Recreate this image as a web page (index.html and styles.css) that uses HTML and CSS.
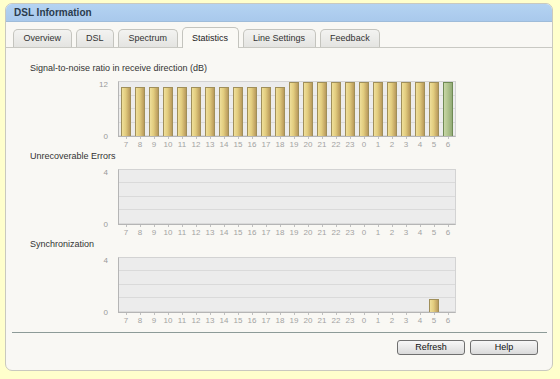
FILE: index.html
```html
<!DOCTYPE html>
<html>
<head>
<meta charset="utf-8">
<link rel="stylesheet" href="styles.css">
</head>
<body>
<div class="panel">
  <div class="header">DSL Information</div>
  <div class="tabs">
    <div class="tab">Overview</div>
    <div class="tab">DSL</div>
    <div class="tab">Spectrum</div>
    <div class="tab active">Statistics</div>
    <div class="tab">Line Settings</div>
    <div class="tab">Feedback</div>
  </div>
  <div class="content">
    <div class="chart">
      <div class="chart-title">Signal-to-noise ratio in receive direction (dB)</div>
      <div class="chart-row">
        <div class="y-axis"><span>12</span><span>0</span></div>
        <div class="plot">
          <div class="slot"><div class="bar" style="height:49.5px"></div></div>
          <div class="slot"><div class="bar" style="height:49.5px"></div></div>
          <div class="slot"><div class="bar" style="height:49.5px"></div></div>
          <div class="slot"><div class="bar" style="height:49.5px"></div></div>
          <div class="slot"><div class="bar" style="height:49.5px"></div></div>
          <div class="slot"><div class="bar" style="height:49.5px"></div></div>
          <div class="slot"><div class="bar" style="height:49.5px"></div></div>
          <div class="slot"><div class="bar" style="height:49.5px"></div></div>
          <div class="slot"><div class="bar" style="height:49.5px"></div></div>
          <div class="slot"><div class="bar" style="height:49.5px"></div></div>
          <div class="slot"><div class="bar" style="height:49.5px"></div></div>
          <div class="slot"><div class="bar" style="height:49.5px"></div></div>
          <div class="slot"><div class="bar" style="height:54px"></div></div>
          <div class="slot"><div class="bar" style="height:54px"></div></div>
          <div class="slot"><div class="bar" style="height:54px"></div></div>
          <div class="slot"><div class="bar" style="height:54px"></div></div>
          <div class="slot"><div class="bar" style="height:54px"></div></div>
          <div class="slot"><div class="bar" style="height:54px"></div></div>
          <div class="slot"><div class="bar" style="height:54px"></div></div>
          <div class="slot"><div class="bar" style="height:54px"></div></div>
          <div class="slot"><div class="bar" style="height:54px"></div></div>
          <div class="slot"><div class="bar" style="height:54px"></div></div>
          <div class="slot"><div class="bar" style="height:54px"></div></div>
          <div class="slot"><div class="bar current" style="height:54px"></div></div>
        </div>
      </div>
      <div class="x-axis">
        <span>7</span><span>8</span><span>9</span><span>10</span><span>11</span><span>12</span><span>13</span><span>14</span><span>15</span><span>16</span><span>17</span><span>18</span><span>19</span><span>20</span><span>21</span><span>22</span><span>23</span><span>0</span><span>1</span><span>2</span><span>3</span><span>4</span><span>5</span><span>6</span>
      </div>
    </div>
    <div class="chart">
      <div class="chart-title">Unrecoverable Errors</div>
      <div class="chart-row">
        <div class="y-axis"><span>4</span><span>0</span></div>
        <div class="plot"></div>
      </div>
      <div class="x-axis">
        <span>7</span><span>8</span><span>9</span><span>10</span><span>11</span><span>12</span><span>13</span><span>14</span><span>15</span><span>16</span><span>17</span><span>18</span><span>19</span><span>20</span><span>21</span><span>22</span><span>23</span><span>0</span><span>1</span><span>2</span><span>3</span><span>4</span><span>5</span><span>6</span>
      </div>
    </div>
    <div class="chart">
      <div class="chart-title">Synchronization</div>
      <div class="chart-row">
        <div class="y-axis"><span>4</span><span>0</span></div>
        <div class="plot">
          <div class="slot"></div><div class="slot"></div><div class="slot"></div><div class="slot"></div>
          <div class="slot"></div><div class="slot"></div><div class="slot"></div><div class="slot"></div>
          <div class="slot"></div><div class="slot"></div><div class="slot"></div><div class="slot"></div>
          <div class="slot"></div><div class="slot"></div><div class="slot"></div><div class="slot"></div>
          <div class="slot"></div><div class="slot"></div><div class="slot"></div><div class="slot"></div>
          <div class="slot"></div><div class="slot"></div>
          <div class="slot"><div class="bar" style="height:13.5px"></div></div>
          <div class="slot"></div>
        </div>
      </div>
      <div class="x-axis">
        <span>7</span><span>8</span><span>9</span><span>10</span><span>11</span><span>12</span><span>13</span><span>14</span><span>15</span><span>16</span><span>17</span><span>18</span><span>19</span><span>20</span><span>21</span><span>22</span><span>23</span><span>0</span><span>1</span><span>2</span><span>3</span><span>4</span><span>5</span><span>6</span>
      </div>
    </div>
  </div>
  <div class="footer">
    <button class="btn">Refresh</button>
    <button class="btn">Help</button>
  </div>
</div>
</body>
</html>
```

FILE: styles.css
```css
html, body {
  margin: 0;
  padding: 0;
}
body {
  background: #ffffcc;
  font-family: "Liberation Sans", Arial, sans-serif;
  width: 560px;
  height: 379px;
  overflow: hidden;
}
.panel {
  margin: 3px 0 0 5px;
  width: 546px;
  height: 366px;
  border: 1px solid #c9c9bf;
  border-radius: 7px;
  background: #f9f8f4;
  overflow: hidden;
  display: flex;
  flex-direction: column;
}
.header {
  height: 17px;
  line-height: 17px;
  background: linear-gradient(to bottom, #b4d3f2, #a9c9ec);
  border-bottom: 1px solid #9fbcd9;
  padding-left: 8px;
  font-size: 10px;
  font-weight: bold;
  color: #2b3c4e;
}
.tabs {
  display: flex;
  align-items: flex-end;
  gap: 4px;
  margin-top: 5px;
  height: 20px;
  padding: 0 7px;
  border-bottom: 1px solid #c9c9c3;
}
.tab {
  box-sizing: border-box;
  height: 18px;
  line-height: 17px;
  padding: 0 9.5px;
  border: 1px solid #c4c4be;
  border-bottom: none;
  border-radius: 5px 5px 0 0;
  background: linear-gradient(to bottom, #f3f3f1, #e4e4e1);
  font-size: 9px;
  color: #333;
}
.tab.active {
  height: 21px;
  line-height: 21px;
  margin-bottom: -1px;
  background: #faf9f5;
  color: #222;
}
.content {
  padding: 14px 0 0 24px;
}
.chart-title {
  font-size: 9px;
  line-height: 12px;
  color: #333;
  margin-bottom: 7px;
}
.chart-row {
  display: flex;
}
.y-axis {
  width: 78px;
  padding-right: 10px;
  margin: -1px 0 -5px;
  display: flex;
  flex-direction: column;
  justify-content: space-between;
  align-items: flex-end;
  font-size: 8px;
  line-height: 10px;
  color: #9a9a9a;
}
.plot {
  width: 336px;
  height: 54px;
  border: 1px solid #d3d3d3;
  border-left-color: #b5b5b5;
  border-bottom-color: #b5b5b5;
  background: repeating-linear-gradient(to bottom, #ececec 0, #ececec 12.5px, #dadada 12.5px, #dadada 13.5px);
  display: flex;
  align-items: flex-end;
}
.slot {
  width: 14px;
  height: 100%;
  display: flex;
  align-items: flex-end;
  justify-content: center;
}
.bar {
  box-sizing: border-box;
  width: 10px;
  border: 1px solid #a08f5a;
  border-bottom: none;
  background: linear-gradient(to right, #efdf9a, #e2cc7e 45%, #b99a5c);
}
.bar.current {
  border-color: #6f8a54;
  background: linear-gradient(to right, #c7d6a6, #b2c58f 45%, #93ab77);
}
.x-axis {
  display: flex;
  margin: 3px 0 0 89px;
  font-size: 8px;
  line-height: 10px;
  color: #a3a3a3;
}
.x-axis span {
  position: relative;
  width: 14px;
  text-align: center;
}
.x-axis span::before {
  content: "";
  position: absolute;
  left: 7px;
  top: -3px;
  width: 1px;
  height: 2px;
  background: #c0c0c0;
}
.footer {
  margin: 6px 5px 0 6px;
  border-top: 1px solid #8d9b98;
  padding: 7px 9px 0 0;
  display: flex;
  justify-content: flex-end;
  gap: 5px;
}
.btn {
  box-sizing: border-box;
  width: 68px;
  height: 15px;
  padding: 0;
  border: 1px solid #6f6f6f;
  border-radius: 3px;
  background: linear-gradient(to bottom, #f7f7f7, #e9e9e9 50%, #dadada);
  font-family: "Liberation Sans", Arial, sans-serif;
  font-size: 9px;
  line-height: 13px;
  color: #111;
}
```
